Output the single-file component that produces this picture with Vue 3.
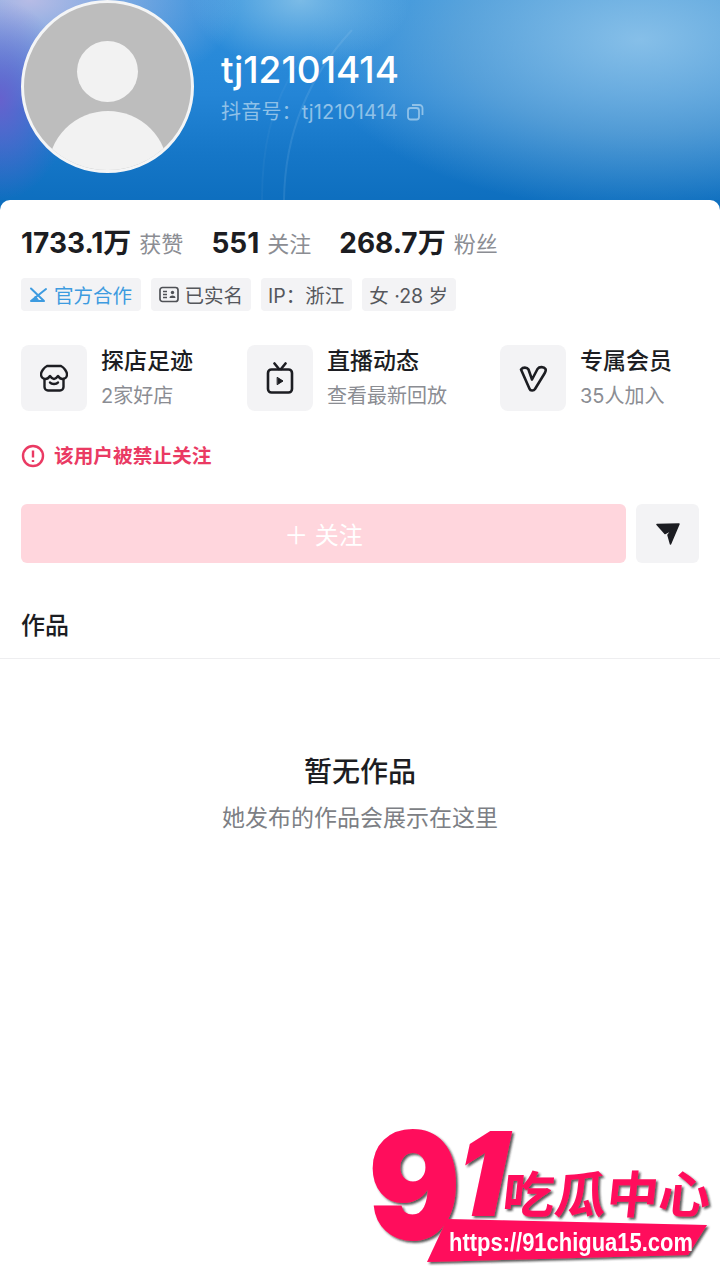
<script setup>
const stats = [
  { num: '1733.1万', label: '获赞' },
  { num: '551', label: '关注' },
  { num: '268.7万', label: '粉丝' },
]
const features = [
  { icon: 'store', title: '探店足迹', sub: '2家好店', width: '226px' },
  { icon: 'tv', title: '直播动态', sub: '查看最新回放', width: '253px' },
  { icon: 'vip', title: '专属会员', sub: '35人加入', width: 'auto' },
]
</script>

<template>
  <div class="page">
    <header class="hero">
      <svg class="streaks" width="720" height="200" viewBox="0 0 720 200" fill="none">
        <path d="M352 30C310 75 285 130 284 200" stroke="#bfe0f5" stroke-opacity=".12" stroke-width="2" />
        <path d="M300 60C270 105 262 150 262 200" stroke="#bfe0f5" stroke-opacity=".05" stroke-width="2" />
      </svg>
      <div class="avatar">
        <span class="head"></span>
        <span class="body"></span>
      </div>
      <div class="who">
        <div class="name">tj12101414</div>
        <div class="uid">
          <span>抖音号：tj12101414</span>
          <svg width="17" height="18" viewBox="0 0 17 18" fill="none" stroke="#8fc1e8" stroke-width="1.8">
            <rect x="1" y="5" width="11" height="11.5" rx="2.5" />
            <path d="M5 2h7.500a3 3 0 0 1 3 3v7" />
          </svg>
        </div>
      </div>
    </header>

    <main class="sheet">
      <div class="stats">
        <div v-for="s in stats" :key="s.label" class="stat">
          <b>{{ s.num }}</b><span>{{ s.label }}</span>
        </div>
      </div>

      <div class="tags">
        <span class="tag tag-blue">
          <svg width="19" height="17" viewBox="0 0 19 17" fill="none" stroke="#3d9be0" stroke-width="2" stroke-linejoin="round" stroke-linecap="round">
            <path d="M2 2.500L15 15H2L17 3" />
            <path d="M3 15l3.500-5 3.500 5z" fill="#3d9be0" stroke-width="1" />
          </svg>
          官方合作
        </span>
        <span class="tag">
          <svg width="20" height="17" viewBox="0 0 20 17" fill="none" stroke="#4f5156" stroke-width="1.700">
            <rect x="1" y="1.500" width="18" height="14" rx="2.500" />
            <path d="M4 5.500h4M4 8.500h4M4 11.500h4" />
            <circle cx="13.500" cy="6.500" r="1.700" fill="#4f5156" stroke="none" />
            <path d="M10.500 12c.3-3.200 5.700-3.200 6 0z" fill="#4f5156" stroke="none" />
          </svg>
          已实名
        </span>
        <span class="tag">IP：浙江</span>
        <span class="tag">女 ·28 岁</span>
      </div>

      <div class="features">
        <div v-for="f in features" :key="f.title" class="feature" :style="{ width: f.width }">
          <div class="icon-box">
            <svg v-if="f.icon === 'store'" width="28" height="28" viewBox="0 0 28 28" fill="none" stroke="#1c1d22" stroke-width="2.400" stroke-linecap="round" stroke-linejoin="round">
              <path d="M7 2h14c3 1.500 6 5.500 6 8.500 0 3-2.500 4.500-4.500 4.500-2.500 0-3.500-1.500-4.500-3-1 1.500-2.500 3-4 3s-3-1.500-4-3c-1 1.500-2 3-4.500 3C3.500 15 1 13.500 1 10.500 1 7.500 4 3.500 7 2z" />
              <path d="M4.500 15v8a3.500 3.500 0 0 0 3.500 3.500h12a3.500 3.500 0 0 0 3.500-3.500v-8" />
              <path d="M10 18.500c1.500 2 6.500 2 8 0" />
            </svg>
            <svg v-else-if="f.icon === 'tv'" width="28" height="32" viewBox="0 0 28 32" fill="none" stroke="#1c1d22" stroke-width="2.600" stroke-linecap="round" stroke-linejoin="round">
              <rect x="2" y="7.500" width="24" height="23" rx="3.500" />
              <path d="M8.500 1.500L13 7M19.500 1.500L15 7" />
              <path d="M11.500 15.500l5.500 3.500-5.500 3.500z" fill="#1c1d22" stroke-width="1" />
            </svg>
            <svg v-else width="28" height="27" viewBox="0 0 28 27" fill="none" stroke="#1c1d22" stroke-width="2.600" stroke-linecap="round" stroke-linejoin="round">
              <path d="M2 4.500c2-2.500 6-2.500 7.500 0l3.500 10 5.500-10.500c2-2.800 6.500-2.300 8 0 .8 1.500-.2 3-1 4.500L16 24c-1.300 2-4.700 2-5.500-.3z" />
            </svg>
          </div>
          <div class="feature-text">
            <div class="feature-title">{{ f.title }}</div>
            <div class="feature-sub">{{ f.sub }}</div>
          </div>
        </div>
      </div>

      <div class="warn">
        <svg width="24" height="24" viewBox="0 0 24 24" fill="none" stroke="#ea3a63" stroke-width="2.400">
          <circle cx="12" cy="12" r="10" />
          <path d="M12 6.500v7M12 16v2" stroke-linejoin="round" />
        </svg>
        该用户被禁止关注
      </div>

      <div class="actions">
        <button class="follow">＋ 关注</button>
        <button class="send">
          <svg width="24" height="22" viewBox="0 0 24 22">
            <path d="M1 1.500L23 1 14.500 21l-2.500-9 4.500-5.500-7.500 4z" fill="#1c1d22" stroke="#1c1d22" stroke-width="1.500" stroke-linejoin="round" />
          </svg>
        </button>
      </div>

      <div class="works-tab">作品</div>

      <div class="empty">
        <div class="empty-title">暂无作品</div>
        <div class="empty-sub">她发布的作品会展示在这里</div>
      </div>
    </main>

    <svg class="logo" width="360" height="160" viewBox="0 0 360 160">
      <defs>
        <filter id="shadow" x="-5%" y="-5%" width="112%" height="112%">
          <feDropShadow dx="2" dy="2" stdDeviation="1" flood-color="#222" flood-opacity=".75" />
        </filter>
      </defs>
      <g filter="url(#shadow)" fill="#ff0a5c">
        <text class="logo-num" transform="translate(9 118) scale(.92 1)" font-size="146" stroke="#ff0a5c" stroke-width="2">9</text>
        <text class="logo-num" transform="translate(91 95) skewX(-12) scale(.92 1)" font-size="114" stroke="#ff0a5c" stroke-width="2">1</text>
        <text class="logo-cn" transform="translate(141 93) skewX(-6)" textLength="208" lengthAdjust="spacingAndGlyphs" font-size="50">吃瓜中心</text>
        <polygon points="87,99 347,105 328,135 67,142" />
      </g>
      <text class="logo-url" x="89" y="131" textLength="244" lengthAdjust="spacingAndGlyphs" font-size="25">https://91chigua15.com</text>
    </svg>
  </div>
</template>

<style scoped>
.page {
  position: relative;
  width: 720px;
  height: 1280px;
  overflow: hidden;
  background: #fff;
  font-family: Inter, "Noto Sans CJK SC", sans-serif;
  color: #1c1d22;
}
.hero {
  position: relative;
  height: 210px;
  display: flex;
  align-items: flex-start;
  padding-left: 21px;
  box-sizing: border-box;
  overflow: hidden;
  background:
    radial-gradient(ellipse 70px 100px at 0 100px, rgba(105, 95, 205, .95), rgba(105, 95, 205, 0)),
    radial-gradient(ellipse 210px 110px at 30px 0, rgba(190, 190, 230, .95), rgba(190, 190, 230, 0)),
    radial-gradient(ellipse 110px 70px at 300px 0, rgba(155, 205, 235, .7), rgba(155, 205, 235, 0)),
    radial-gradient(ellipse 330px 170px at 640px 40px, rgba(150, 200, 235, .85), rgba(125, 180, 220, .55) 55%, rgba(125, 180, 220, 0)),
    linear-gradient(180deg, #2f90dc 0%, #2485d6 45%, #1677c8 72%, #0c6dbd 100%);
}
.streaks {
  position: absolute;
  left: 0;
  top: 0;
}
.avatar {
  position: relative;
  flex: none;
  width: 173px;
  height: 173px;
  box-sizing: border-box;
  border: 3px solid #f4f5f6;
  border-radius: 50%;
  overflow: hidden;
  background: #bdbdbd;
}
.head {
  position: absolute;
  left: 53px;
  top: 38px;
  width: 61px;
  height: 61px;
  border-radius: 50%;
  background: #f2f2f2;
}
.body {
  position: absolute;
  left: 24px;
  top: 108px;
  width: 120px;
  height: 120px;
  border-radius: 50%;
  background: #f2f2f2;
}
.who {
  position: relative;
  margin-left: 27px;
  padding-top: 48px;
}
.name {
  font-size: 37px;
  font-weight: 500;
  line-height: 44px;
  color: #fff;
}
.uid {
  display: flex;
  align-items: center;
  gap: 9px;
  margin-top: 7px;
  font-size: 20px;
  letter-spacing: .2px;
  line-height: 26px;
  color: #8fc1e8;
}
.sheet {
  position: relative;
  margin-top: -10px;
  height: 1080px;
  padding: 23px 21px 0;
  box-sizing: border-box;
  background: #fff;
  border-radius: 10px 10px 0 0;
}
.stats {
  display: flex;
  gap: 28px;
  height: 40px;
  align-items: center;
}
.stat {
  display: flex;
  align-items: center;
  gap: 8px;
}
.stat b {
  font-size: 28px;
  font-weight: 700;
  line-height: 38px;
}
.stat span {
  margin-bottom: 3px;
  font-size: 22px;
  color: #8b8d93;
}
.tags {
  display: flex;
  gap: 10px;
  margin-top: 15px;
}
.tag {
  display: flex;
  align-items: center;
  gap: 6px;
  height: 33px;
  padding: 0 7.5px;
  border-radius: 4px;
  background: #f3f3f5;
  font-size: 19.5px;
  color: #55575c;
  white-space: nowrap;
}
.tag-blue {
  padding: 0 9px 0 8px;
  color: #3d9be0;
}
.features {
  display: flex;
  margin-top: 34px;
}
.feature {
  display: flex;
  gap: 14px;
  flex: none;
}
.icon-box {
  flex: none;
  display: flex;
  align-items: center;
  justify-content: center;
  width: 66px;
  height: 66px;
  border-radius: 8px;
  background: #f3f3f5;
}
.feature-title {
  font-size: 23px;
  font-weight: 500;
  line-height: 32px;
}
.feature-sub {
  margin-top: 5px;
  font-size: 20px;
  line-height: 29px;
  color: #8b8d93;
}
.warn {
  display: flex;
  align-items: center;
  gap: 9px;
  margin-top: 30px;
  height: 30px;
  font-size: 19.7px;
  font-weight: 700;
  color: #ea3a63;
  line-height: 26px;
}
.actions {
  display: flex;
  gap: 10px;
  margin-top: 33px;
}
.follow,
.send {
  height: 59px;
  border: 0;
  padding: 0;
  font-family: inherit;
}
.follow {
  width: 605px;
  border-radius: 6px;
  background: #ffd6dd;
  color: #fff;
  font-size: 24px;
}
.send {
  display: flex;
  align-items: center;
  justify-content: center;
  width: 63px;
  border-radius: 6px;
  background: #f3f3f5;
}
.works-tab {
  margin: 0 -21px;
  padding: 48px 21px 10px;
  height: 96px;
  box-sizing: border-box;
  border-bottom: 1px solid #eeeef0;
  font-size: 24px;
  font-weight: 500;
  line-height: 30px;
}
.empty {
  margin-top: 93px;
  text-align: center;
}
.empty-title {
  font-size: 28px;
  font-weight: 500;
  line-height: 40px;
}
.empty-sub {
  margin-top: 9px;
  font-size: 23px;
  line-height: 34px;
  color: #7d7f85;
}
.logo {
  position: absolute;
  left: 360px;
  top: 1120px;
}
.logo-num {
  font-family: Inter, sans-serif;
  font-weight: 900;
}
.logo-cn {
  font-family: "Noto Sans CJK SC", sans-serif;
  font-weight: 700;
}
.logo-url {
  font-family: "Liberation Sans", sans-serif;
  font-weight: 700;
  fill: #fff;
}
</style>
